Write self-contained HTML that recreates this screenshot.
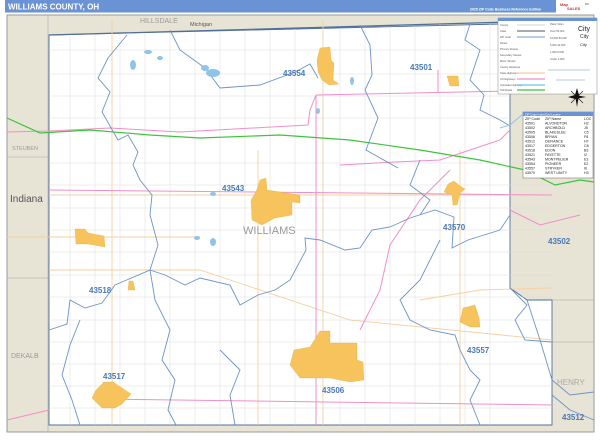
<!DOCTYPE html>
<html><head><meta charset="utf-8"><style>
html,body{margin:0;padding:0;background:#fff;}
body{width:600px;height:435px;overflow:hidden;font-family:"Liberation Sans",sans-serif;}
</style></head><body>
<svg width="600" height="435" viewBox="0 0 600 435" xmlns="http://www.w3.org/2000/svg" font-family="Liberation Sans, sans-serif">
<rect x="0" y="0" width="600" height="435" fill="#ffffff"/>
<!-- header -->
<rect x="5" y="0" width="595" height="12.5" fill="#6a93d6"/>
<text x="8" y="9.5" font-size="8" font-weight="bold" fill="#fff">WILLIAMS COUNTY, OH</text>
<text x="470" y="10.5" font-size="3.5" fill="#fff" font-weight="bold">2025 ZIP Code Business Reference Edition</text>
<rect x="556" y="0" width="44" height="13" fill="#fff"/>
<text x="560" y="6" font-size="4" fill="#c33" font-weight="bold">Map</text>
<text x="567" y="10" font-size="4" fill="#c33" font-weight="bold">SALES</text>
<text x="585" y="5" font-size="2.5" fill="#444">ZIP</text>
<!-- frame -->
<rect x="7" y="15" width="587" height="417" fill="#e7e3d5" stroke="#999" stroke-width="1"/>
<line x1="48" y1="15" x2="48" y2="432" stroke="#aaa" stroke-width="0.6"/>
<line x1="7" y1="157" x2="48" y2="157" stroke="#aaa" stroke-width="0.6"/>
<line x1="7" y1="278" x2="48" y2="278" stroke="#aaa" stroke-width="0.6"/>
<line x1="552" y1="300" x2="594" y2="300" stroke="#aaa" stroke-width="0.6"/>
<line x1="552" y1="342" x2="594" y2="342" stroke="#aaa" stroke-width="0.6"/>
<!-- county -->
<polygon points="49,35 500,24 510,24 510,288 527,300 552,300 552,425 49,425" fill="#fff" stroke="#4f6f9a" stroke-width="0.9"/>
<line x1="49" y1="35" x2="510" y2="22" stroke="#4f6f9a" stroke-width="1.2"/>
<!-- road grid -->
<g stroke="#dcdcdc" stroke-width="0.5">
<line x1="49" y1="50" x2="510" y2="50"/><line x1="49" y1="74" x2="510" y2="74"/>
<line x1="49" y1="96" x2="510" y2="96"/><line x1="49" y1="118" x2="510" y2="118"/>
<line x1="49" y1="163" x2="552" y2="163"/><line x1="49" y1="185" x2="552" y2="185"/>
<line x1="49" y1="208" x2="552" y2="208"/><line x1="49" y1="230" x2="552" y2="230"/>
<line x1="49" y1="252" x2="552" y2="252"/><line x1="49" y1="275" x2="552" y2="275"/>
<line x1="49" y1="297" x2="552" y2="297"/><line x1="49" y1="320" x2="552" y2="320"/>
<line x1="49" y1="342" x2="552" y2="342"/><line x1="49" y1="364" x2="552" y2="364"/>
<line x1="49" y1="386" x2="552" y2="386"/><line x1="49" y1="408" x2="552" y2="408"/>
<line x1="70" y1="35" x2="70" y2="425"/><line x1="95" y1="35" x2="95" y2="425"/>
<line x1="120" y1="34" x2="120" y2="425"/><line x1="145" y1="33" x2="145" y2="425"/>
<line x1="170" y1="33" x2="170" y2="425"/><line x1="195" y1="32" x2="195" y2="425"/>
<line x1="220" y1="31" x2="220" y2="425"/><line x1="245" y1="31" x2="245" y2="425"/>
<line x1="270" y1="30" x2="270" y2="425"/><line x1="295" y1="29" x2="295" y2="425"/>
<line x1="340" y1="28" x2="340" y2="425"/><line x1="365" y1="27" x2="365" y2="425"/>
<line x1="390" y1="27" x2="390" y2="425"/><line x1="415" y1="26" x2="415" y2="425"/>
<line x1="440" y1="25" x2="440" y2="425"/><line x1="465" y1="25" x2="465" y2="425"/>
<line x1="490" y1="24" x2="490" y2="425"/>
</g>
<!-- state highways (orange) -->
<g stroke="#f6cfa0" stroke-width="0.9" fill="none">
<line x1="112" y1="20" x2="112" y2="425"/>
<line x1="323" y1="20" x2="323" y2="425"/>
<line x1="258" y1="150" x2="258" y2="425"/>
<line x1="460" y1="150" x2="460" y2="425"/>
<line x1="7" y1="237" x2="200" y2="237"/>
<path d="M49,195 L552,195"/>
<path d="M49,270 L200,270 L350,320 L552,340"/>
<path d="M420,300 L480,290 L552,288"/>
</g>
<!-- US highways (pink) -->
<g stroke="#f08fc8" stroke-width="1" fill="none">
<path d="M316,95 L510,91"/>
<path d="M316,95 L310,110 L308,125 L180,132 L110,128 L49,131 L7,132"/>
<path d="M316,95 L316,425"/>
<path d="M49,190 L552,195"/>
<path d="M340,165 L395,162 L440,160 L470,150 L500,140 L510,130"/>
<path d="M450,170 L420,200 L390,245 L380,290 L360,330"/>
<path d="M49,410 L7,420"/>
<path d="M100,399 L552,405"/>
<path d="M510,210 L540,225 L580,215"/>
<path d="M438,70 L438,92"/>
</g>
<!-- turnpike green -->
<path d="M7,118 L40,133 L90,130 L150,135 L200,138 L280,135 L350,140 L420,150 L480,160 L525,170 L555,185 L580,180 L594,182" stroke="#3cc43c" stroke-width="1.2" fill="none"/>
<!-- ZIP boundaries -->
<g stroke="#6b93c9" stroke-width="0.9" fill="none">
<path d="M127,35 L108,58 L98,78 L110,92 L102,112 L118,140 L128,135 L138,152 L133,165 L140,180 L152,195 L150,215 L158,245 L150,270 L115,285 L102,303 L85,308 L70,300 L67,324 L49,330"/>
<path d="M170,30 L180,50 L205,68 L220,88 L260,85 L295,72 L310,64 L318,78"/>
<path d="M360,25 L370,45 L372,75 L365,90 L378,118 L366,150 L398,168"/>
<path d="M470,24 L465,40 L480,50 L470,80 L484,95 L480,110 L500,120 L510,126"/>
<path d="M150,270 L165,275 L185,285 L200,278 L230,285 L240,305 L258,295 L275,290 L290,280 L306,250 L305,238 L320,240 L345,250 L360,248 L372,230 L390,227 L410,218 L435,210 L454,217 L452,248 L468,240 L500,230 L510,215"/>
<path d="M150,270 L155,300 L170,330 L162,360 L175,380 L168,410 L176,425"/>
<path d="M80,320 L70,345 L62,375 L72,400 L80,425"/>
<path d="M220,350 L240,370 L230,395 L235,425"/>
<path d="M440,240 L430,260 L420,280 L400,300 L410,320 L430,330 L455,335 L460,350 L470,370 L480,380 L470,400 L480,425"/>
<path d="M510,288 L527,305 L515,320 L525,340 L552,342"/>
<path d="M527,300 L540,340 L552,380 L570,395 L594,392"/>
<path d="M552,395 L570,410 L594,420"/>
<path d="M420,160 L410,185 L430,200 L420,215"/>
</g>
<!-- towns -->
<g fill="#f6c35c" stroke="#e0a93a" stroke-width="0.3">
<path d="M320,48 L330,47 L331,60 L334,63 L333,80 L339,84 L329,85 L322,80 L318,72 L317,60 Z"/>
<path d="M447,76 L458,76 L459,86 L450,86 Z"/>
<path d="M260,180 L266,178 L267,190 L300,195 L300,203 L292,202 L292,215 L275,218 L262,225 L252,220 L251,200 L256,192 Z"/>
<path d="M448,184 L454,181 L460,186 L465,189 L460,193 L457,205 L453,205 L452,195 L444,192 Z"/>
<path d="M75,229 L85,229 L88,233 L104,236 L105,247 L88,244 L76,244 Z"/>
<path d="M129,281 L133,281 L135,290 L128,290 Z"/>
<path d="M320,331 L330,331 L330,343 L357,343 L357,360 L363,362 L364,380 L350,382 L330,378 L300,378 L290,365 L294,350 L310,347 Z"/>
<path d="M463,308 L475,305 L479,318 L480,327 L470,327 L460,322 Z"/>
<path d="M104,382 L113,382 L122,388 L131,394 L122,404 L115,408 L102,408 L92,398 L96,390 Z"/>
</g>
<!-- lakes -->
<g fill="#8fc3e8">
<ellipse cx="213" cy="73" rx="7" ry="4"/><ellipse cx="205" cy="68" rx="4" ry="3"/>
<ellipse cx="133" cy="65" rx="3" ry="5"/><ellipse cx="160" cy="58" rx="3" ry="2"/>
<ellipse cx="148" cy="52" rx="4" ry="2"/><ellipse cx="352" cy="81" rx="2" ry="4"/>
<ellipse cx="213" cy="242" rx="3" ry="4"/><ellipse cx="197" cy="238" rx="3" ry="2"/>
<ellipse cx="213" cy="194" rx="3" ry="2"/><ellipse cx="318" cy="111" rx="2" ry="3"/>
</g>
<!-- labels -->
<g font-weight="bold" fill="#4a78b8" font-size="8">
<text x="283" y="76">43554</text>
<text x="410" y="70">43501</text>
<text x="222" y="191">43543</text>
<text x="443" y="230">43570</text>
<text x="548" y="244">43502</text>
<text x="89" y="293">43518</text>
<text x="467" y="353">43557</text>
<text x="103" y="379">43517</text>
<text x="322" y="393">43506</text>
<text x="562" y="420">43512</text>
</g>
<text x="243" y="234" font-size="11" fill="#999">WILLIAMS</text>
<text x="10" y="202" font-size="10" fill="#555">Indiana</text>
<text x="12" y="150" font-size="5.5" fill="#9a9a9a">STEUBEN</text>
<text x="11" y="358" font-size="7" fill="#9a9a9a">DEKALB</text>
<text x="557" y="385" font-size="8" fill="#aaa">HENRY</text>
<text x="140" y="23" font-size="7" fill="#9a9a9a">HILLSDALE</text>
<text x="190" y="26" font-size="5.5" fill="#555">Michigan</text>
<!-- legend -->
<rect x="498" y="18" width="99" height="76" fill="#fff" stroke="#888" stroke-width="0.5"/>
<rect x="498" y="18" width="99" height="3" fill="#6a93d6"/>
<g font-size="2.6" fill="#555">
<text x="500" y="26">County</text><text x="500" y="32">State</text><text x="500" y="38">ZIP Code</text>
<text x="500" y="44">Rivers</text><text x="500" y="50">Primary Streets</text><text x="500" y="56">Secondary Streets</text>
<text x="500" y="62">Minor Streets</text><text x="500" y="68">County Highways</text><text x="500" y="74">State Highways</text>
<text x="500" y="80">US Highways</text><text x="500" y="86">Interstate Highways</text><text x="500" y="91">Toll Roads</text>
<text x="550" y="25">Place Sizes</text><text x="550" y="32">Over 50,000</text><text x="550" y="39">10,000-50,000</text>
<text x="550" y="46">5,000-10,000</text><text x="550" y="53">1,000-5,000</text><text x="550" y="60">Under 1,000</text>
</g>
<g font-size="5" fill="#222"><text x="578" y="31" font-size="7">City</text><text x="580" y="38">City</text><text x="580" y="46" font-size="4">City</text></g>
<g stroke-width="1.2">
<line x1="517" y1="25" x2="545" y2="25" stroke="#ddd"/><line x1="517" y1="31" x2="545" y2="31" stroke="#777"/>
<line x1="517" y1="37" x2="545" y2="37" stroke="#8fb0d8"/><line x1="517" y1="73" x2="545" y2="73" stroke="#f6cfa0"/>
<line x1="517" y1="79" x2="545" y2="79" stroke="#f08fc8"/><line x1="517" y1="85" x2="545" y2="85" stroke="#6bc5e8"/>
<line x1="517" y1="90" x2="545" y2="90" stroke="#3cc43c"/>
<line x1="548" y1="70" x2="590" y2="70" stroke="#6b93c9" stroke-width="0.6"/>
<line x1="556" y1="80" x2="585" y2="80" stroke="#6b93c9" stroke-width="0.6"/>
</g>
<!-- compass -->
<g fill="#111">
<polygon points="577,88 579,95 577,107 575,95"/>
<polygon points="568,97 575,95 586,97 575,99"/>
<polygon points="571,91 577,97 583,103 577,97" stroke="#111" stroke-width="0.6"/>
<polygon points="583,91 577,97 571,103" stroke="#111" stroke-width="0.6"/>
</g>
<!-- ZIP table -->
<rect x="523" y="112" width="70" height="66" fill="#fff" stroke="#666" stroke-width="0.5"/>
<rect x="523" y="112" width="70" height="4" fill="#6a93d6"/>
<text x="525" y="115.3" font-size="2.8" fill="#fff">ZIP Code Index/Grid Locator</text>
<path d="M523,114 L510,125 L500,128" stroke="#8fc3e8" stroke-width="1" fill="none"/>
<g font-size="3.6" fill="#222">
<text x="525" y="120">ZIP Code</text><text x="545" y="120">ZIP Name</text><text x="584" y="120">LOC</text>
<text x="525" y="124.5">43501</text><text x="545" y="124.5">ALVORDTON</text><text x="584" y="124.5">H2</text>
<text x="525" y="129">43502</text><text x="545" y="129">ARCHBOLD</text><text x="584" y="129">J5</text>
<text x="525" y="133.5">43505</text><text x="545" y="133.5">BLAKESLEE</text><text x="584" y="133.5">C5</text>
<text x="525" y="138">43506</text><text x="545" y="138">BRYAN</text><text x="584" y="138">F8</text>
<text x="525" y="142.5">43512</text><text x="545" y="142.5">DEFIANCE</text><text x="584" y="142.5">H7</text>
<text x="525" y="147">43517</text><text x="545" y="147">EDGERTON</text><text x="584" y="147">C8</text>
<text x="525" y="151.5">43518</text><text x="545" y="151.5">EDON</text><text x="584" y="151.5">B3</text>
<text x="525" y="156">43521</text><text x="545" y="156">FAYETTE</text><text x="584" y="156">I2</text>
<text x="525" y="160.5">43543</text><text x="545" y="160.5">MONTPELIER</text><text x="584" y="160.5">E3</text>
<text x="525" y="165">43554</text><text x="545" y="165">PIONEER</text><text x="584" y="165">E2</text>
<text x="525" y="169.5">43557</text><text x="545" y="169.5">STRYKER</text><text x="584" y="169.5">I6</text>
<text x="525" y="174">43570</text><text x="545" y="174">WEST UNITY</text><text x="584" y="174">H3</text>
</g>
</svg>
</body></html>
